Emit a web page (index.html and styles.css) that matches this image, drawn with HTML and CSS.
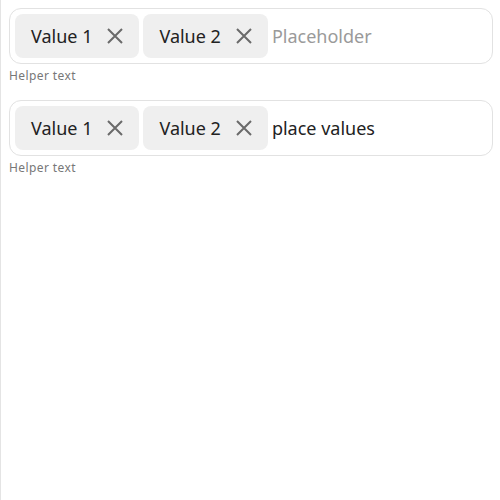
FILE: index.html
```html
<!DOCTYPE html>
<html lang="en">
<head>
<meta charset="utf-8">
<title>Chips input</title>
<link rel="stylesheet" href="styles.css">
</head>
<body>
<div class="page">
  <div class="group">
    <div class="field">
      <span class="chip"><span class="chip-label">Value 1</span><svg class="chip-x" viewBox="0 0 16 16"><path d="M1 1L15 15M15 1L1 15"/></svg></span>
      <span class="chip"><span class="chip-label">Value 2</span><svg class="chip-x" viewBox="0 0 16 16"><path d="M1 1L15 15M15 1L1 15"/></svg></span>
      <input class="entry" type="text" placeholder="Placeholder">
    </div>
    <div class="helper">Helper text</div>
  </div>
  <div class="group">
    <div class="field">
      <span class="chip"><span class="chip-label">Value 1</span><svg class="chip-x" viewBox="0 0 16 16"><path d="M1 1L15 15M15 1L1 15"/></svg></span>
      <span class="chip"><span class="chip-label">Value 2</span><svg class="chip-x" viewBox="0 0 16 16"><path d="M1 1L15 15M15 1L1 15"/></svg></span>
      <input class="entry" type="text" placeholder="Placeholder" value="place values">
    </div>
    <div class="helper">Helper text</div>
  </div>
</div>
</body>
</html>
```
FILE: styles.css
```css
html, body {
  margin: 0;
  padding: 0;
  background: #fff;
}
body {
  font-family: "Noto Sans", sans-serif;
}
.page {
  min-height: 100vh;
  box-sizing: border-box;
  border-left: 1px solid #e4e4e4;
  padding: 8px 7px 8px 8px;
  display: flex;
  flex-direction: column;
  gap: 16px;
}
.group {
  display: flex;
  flex-direction: column;
  gap: 4px;
}
.field {
  display: flex;
  align-items: center;
  gap: 4px;
  padding: 5px;
  border: 1px solid #e2e2e2;
  border-radius: 12px;
}
.chip {
  display: flex;
  align-items: center;
  gap: 15px;
  height: 44px;
  padding: 0 16px;
  box-sizing: border-box;
  background: #efefef;
  border-radius: 8px;
  color: #222;
  font-size: 18px;
}
.chip-x {
  width: 16px;
  height: 16px;
  flex: none;
}
.chip-x path {
  stroke: #6a6a6a;
  stroke-width: 2;
  fill: none;
}
.entry {
  flex: 1;
  min-width: 0;
  border: none;
  outline: none;
  padding: 0;
  margin: 0;
  font-family: "Noto Sans", sans-serif;
  font-size: 18px;
  color: #222;
  background: transparent;
}
.entry::placeholder {
  color: #9a9a9a;
}
.helper {
  font-size: 12px;
  line-height: 16px;
  letter-spacing: 0.4px;
  color: #777;
}
```
